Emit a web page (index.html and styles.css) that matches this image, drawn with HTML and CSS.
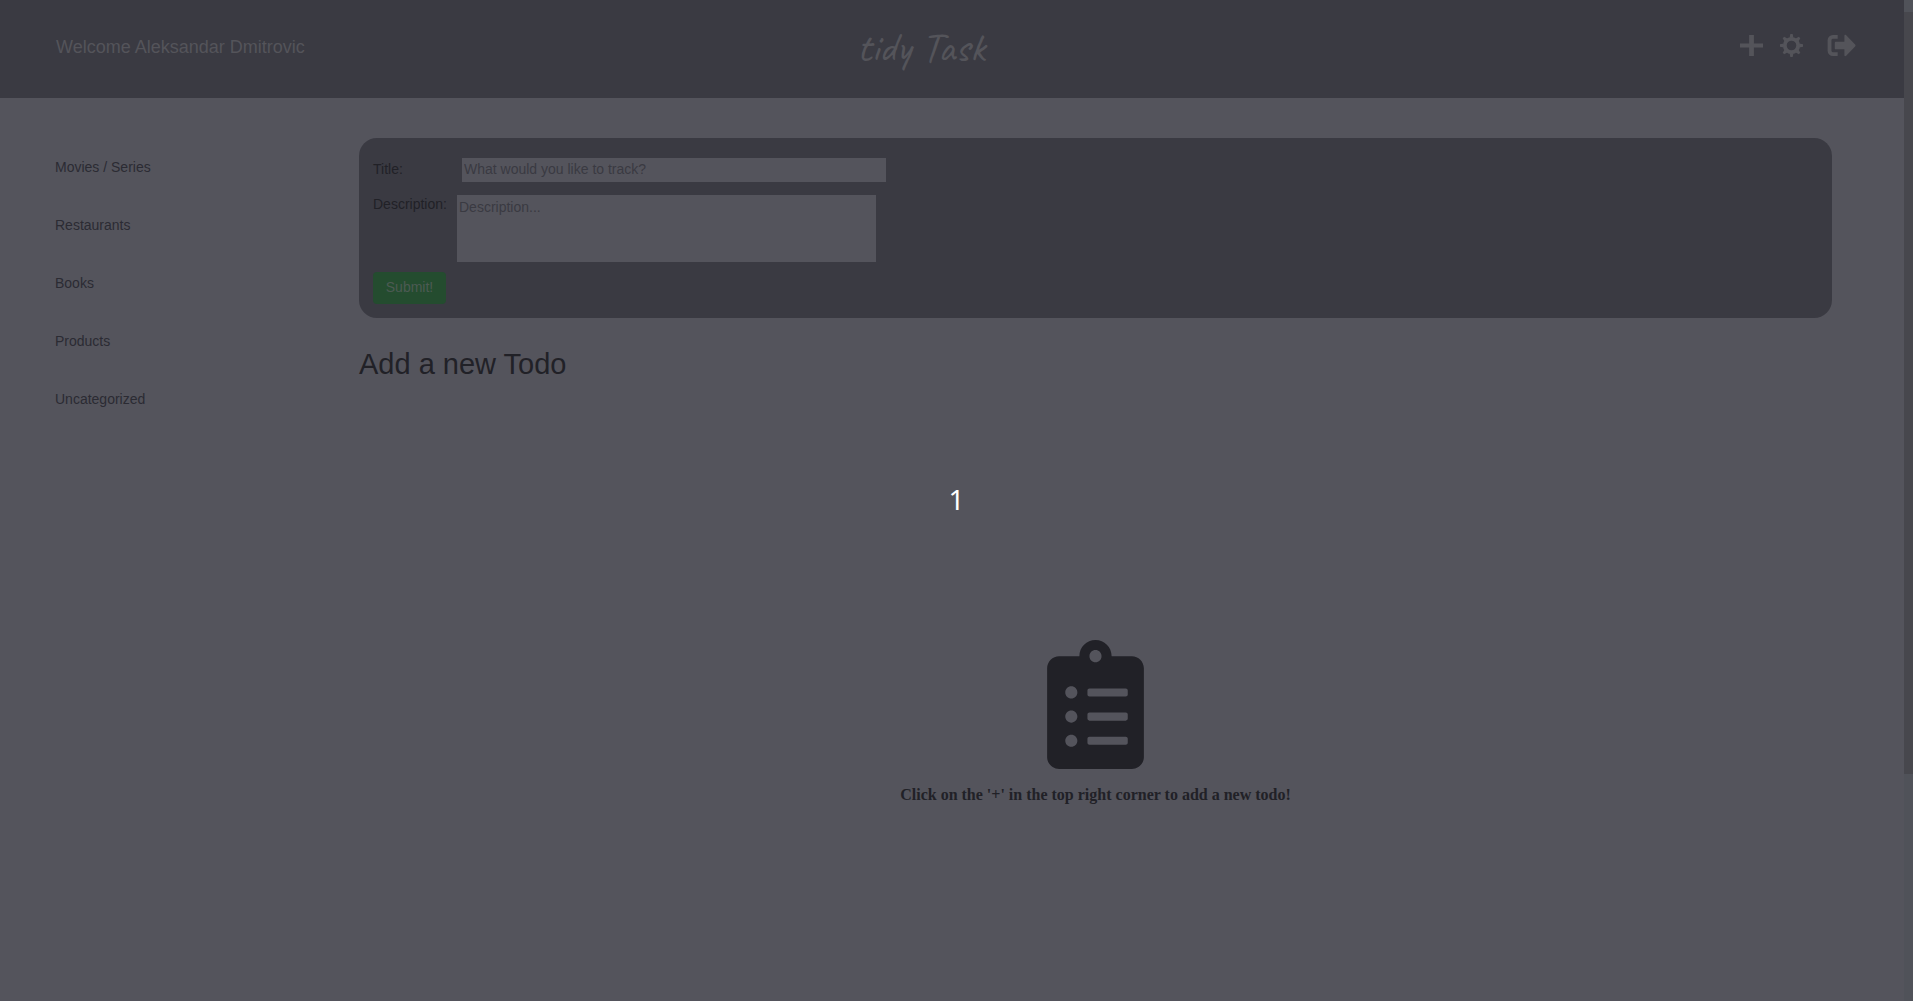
FILE: index.html
```html
<!DOCTYPE html>
<html lang="en">
<head>
<meta charset="utf-8">
<title>tidy Task</title>
<link rel="stylesheet" href="styles.css">
</head>
<body>
<div class="app">
  <div class="page">
    <header class="topbar">
      <p class="welcome">Welcome Aleksandar Dmitrovic</p>
      <h1 class="logo">tidy Task</h1>
      <div class="actions">
        <button class="icon-btn" type="button" aria-label="Add todo">
          <svg width="23" height="23" viewBox="0 0 24 24"><path d="M9.500 1h5v9H24v4h-9.500v9h-5v-9H0v-4h9.500z"/></svg>
        </button>
        <button class="icon-btn" type="button" aria-label="Settings">
          <svg width="23" height="23" viewBox="0 0 24 24"><circle cx="12" cy="12" r="7" fill="none" stroke="currentColor" stroke-width="4"/><path d="M10.800 0h2.400l.8 4h-4zM10.800 24h2.400l.8-4h-4zM0 10.800v2.400l4 .8v-4zM24 10.800v2.400l-4 .8v-4zM2.800 4.400l1.600-1.600 3.600 2.200-3 3zM21.200 4.400l-1.600-1.600-3.600 2.200 3 3zM2.800 19.600l1.600 1.600 3.600-2.200-3-3zM21.200 19.600l-1.600 1.600-3.600-2.200 3-3z"/></svg>
        </button>
        <button class="icon-btn icon-btn-wide" type="button" aria-label="Log out">
          <svg width="29" height="23" viewBox="0 0 30 24"><path d="M11 3H6a3.500 3.500 0 0 0-3.500 3.500v11A3.500 3.500 0 0 0 6 21h5" fill="none" stroke="currentColor" stroke-width="4"/><path d="M9 8h9V2c0-1.300 1-1.600 1.900-.8l9.300 9.800c.6.700.6 1.300 0 2l-9.300 9.800c-.9.800-1.900.5-1.900-.8v-6H9c-.7 0-1-.4-1-1V9c0-.6.300-1 1-1z"/></svg>
        </button>
      </div>
    </header>
    <div class="columns">
      <nav class="sidebar">
        <a href="#movies">Movies / Series</a>
        <a href="#restaurants">Restaurants</a>
        <a href="#books">Books</a>
        <a href="#products">Products</a>
        <a href="#uncategorized">Uncategorized</a>
      </nav>
      <main class="content">
        <form class="todo-form">
          <div class="field field-title">
            <label for="title">Title:</label>
            <input id="title" type="text" placeholder="What would you like to track?">
          </div>
          <div class="field">
            <label for="description">Description:</label>
            <textarea id="description" placeholder="Description..."></textarea>
          </div>
          <button class="submit" type="button">Submit!</button>
        </form>
        <h2 class="heading">Add a new Todo</h2>
        <section class="empty">
          <svg width="97" height="129" viewBox="0 0 384 512"><path fill-rule="evenodd" d="M336 64h-80c0-35.300-28.700-64-64-64s-64 28.700-64 64H48C21.500 64 0 85.500 0 112v352c0 26.500 21.500 48 48 48h288c26.500 0 48-21.500 48-48V112c0-26.500-21.500-48-48-48zM96 424c-13.300 0-24-10.700-24-24s10.700-24 24-24 24 10.700 24 24-10.700 24-24 24zm0-96c-13.300 0-24-10.700-24-24s10.700-24 24-24 24 10.700 24 24-10.700 24-24 24zm0-96c-13.300 0-24-10.700-24-24s10.700-24 24-24 24 10.700 24 24-10.700 24-24 24zm96-192c13.300 0 24 10.700 24 24s-10.700 24-24 24-24-10.700-24-24 10.700-24 24-24zm128 368c0 4.400-3.600 8-8 8H168c-4.400 0-8-3.600-8-8v-16c0-4.400 3.600-8 8-8h144c4.400 0 8 3.600 8 8v16zm0-96c0 4.400-3.600 8-8 8H168c-4.400 0-8-3.600-8-8v-16c0-4.400 3.600-8 8-8h144c4.400 0 8 3.600 8 8v16zm0-96c0 4.400-3.600 8-8 8H168c-4.400 0-8-3.600-8-8v-16c0-4.400 3.600-8 8-8h144c4.400 0 8 3.600 8 8v16z"/></svg>
          <p>Click on the '+' in the top right corner to add a new todo!</p>
        </section>
      </main>
    </div>
  </div>
  <div class="scrollbar"><div class="thumb"></div></div>
  <div class="counter">1</div>
</div>
</body>
</html>
```

FILE: styles.css
```css
* { box-sizing: border-box; }
body {
  margin: 0;
  background: #54545c;
  color: #212127;
  font: 14px/20px "Liberation Sans", Arial, sans-serif;
}
p, h1, h2 { margin: 0; }
.app { position: relative; display: flex; min-height: 100vh; }
.page { flex: 1; display: flex; flex-direction: column; }
.topbar {
  display: grid;
  grid-template-columns: 1fr auto 1fr;
  align-items: center;
  height: 98px;
  padding: 0 48px 6px 0;
  background: #3a3a42;
  color: #54545a;
}
.welcome { padding: 2px 0 0 56px; font-size: 18px; line-height: 24px; }
.logo { padding: 2px 14px 0 0; font: 400 43px/48px "Caveat", cursive; }
.actions { display: flex; justify-content: flex-end; gap: 17px; padding-bottom: 1px; }
.icon-btn { display: flex; padding: 0; border: 0; background: none; color: inherit; }
.icon-btn-wide { margin-left: 7px; }
svg { display: block; fill: currentColor; }
.columns { flex: 1; display: flex; }
.sidebar {
  width: 359px;
  padding: 59px 55px 0;
  display: flex;
  flex-direction: column;
  gap: 38px;
}
.sidebar a { color: #2b2b33; text-decoration: none; }
.content {
  flex: 1;
  display: flex;
  flex-direction: column;
  padding: 40px 72px 0 0;
}
.todo-form {
  height: 180px;
  padding: 20px 14px 0;
  border-radius: 18px;
  background: #3a3a42;
}
.field { display: flex; gap: 8px; margin-bottom: 10px; }
.field label { width: 76px; line-height: 18px; }
.field-title { gap: 13px; margin-bottom: 13px; }
.field-title label { padding-top: 2px; }
.field input, .field textarea {
  display: block;
  width: 424px;
  height: 24px;
  padding: 0 2px 2px;
  border: 0;
  resize: none;
  background: #54545c;
  color: #212127;
  font: inherit;
}
.field textarea { width: 419px; height: 67px; padding: 2px; }
::placeholder { color: #3a3a42; opacity: 1; }
.submit {
  width: 73px;
  height: 32px;
  padding: 0 0 2px;
  border: 0;
  border-radius: 4px;
  background: #244c2f;
  color: #4c5a53;
  font: inherit;
}
.heading { margin-top: 28px; font-size: 29px; font-weight: 400; line-height: 36px; }
.empty {
  flex: 1;
  display: flex;
  flex-direction: column;
  align-items: center;
  justify-content: center;
  gap: 16px;
  padding-top: 62px;
  font: bold 16px/20px "Liberation Serif", "Times New Roman", serif;
}
.scrollbar { width: 9px; padding-top: 12px; background: #505259; }
.thumb { height: 77%; background: #47474d; }
.counter {
  position: absolute;
  inset: 0;
  display: flex;
  align-items: center;
  justify-content: center;
  padding-bottom: 3px;
  color: #fff;
  font: 28px/36px "Noto Sans", sans-serif;
  pointer-events: none;
}
```
